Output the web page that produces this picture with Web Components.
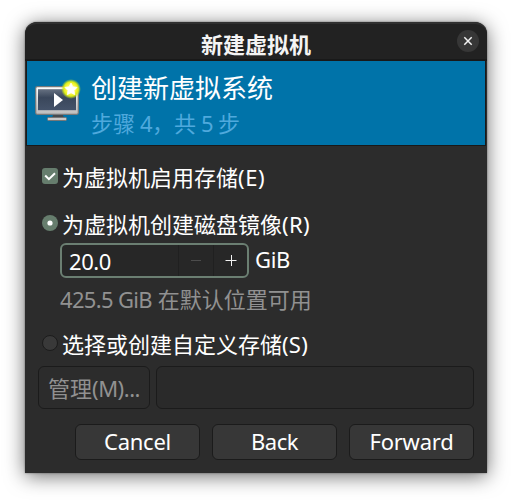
<!DOCTYPE html>
<html lang="zh-CN">
<head>
<meta charset="utf-8">
<title>新建虚拟机</title>
<style>
html,body{margin:0;background:#fff}
body{height:501px;overflow:hidden;font:22px/30px "Noto Sans","Noto Sans CJK SC",sans-serif;color:#fff}
</style>
</head>
<body>
<vm-dialog>
  <vm-titlebar slot="title">新建虚拟机</vm-titlebar>
  <vm-banner slot="banner">创建新虚拟系统<span slot="step">步骤 <fit-text w="12">4</fit-text>，共 <fit-text w="12">5</fit-text> 步</span></vm-banner>
  <vm-option kind="check" style="margin-top:16px">为虚拟机启用存储<fit-text w="27">(E)</fit-text></vm-option>
  <vm-option kind="radio-on" style="margin-top:17px">为虚拟机创建磁盘镜像<fit-text w="28">(R)</fit-text></vm-option>
  <vm-spin value="20.0"><fit-text w="35">GiB</fit-text></vm-spin>
  <vm-hint><fit-text w="92">425.5 GiB</fit-text> 在默认位置可用</vm-hint>
  <vm-option kind="radio" style="margin-top:15px">选择或创建自定义存储<fit-text w="26">(S)</fit-text></vm-option>
  <vm-path>管理<fit-text w="48">(M)...</fit-text></vm-path>
  <vm-button slot="actions"><fit-text w="67">Cancel</fit-text></vm-button>
  <vm-button slot="actions"><fit-text w="47">Back</fit-text></vm-button>
  <vm-button slot="actions"><fit-text w="84">Forward</fit-text></vm-button>
</vm-dialog>
<script>
const define = (name, html, setup) => customElements.define(name, class extends HTMLElement {
  constructor(){
    super();
    this.attachShadow({mode:'open'}).innerHTML = html;
  }
  connectedCallback(){ if (setup) setup(this, this.shadowRoot); }
});

// Spreads a Latin run so that its advance equals the w attribute.
define('fit-text', `<style>:host{display:inline-block;white-space:pre}span{display:inline-block}</style><span><slot></slot></span>`,
  (el, root) => {
    const s = root.querySelector('span');
    const n = el.textContent.length, w = +el.getAttribute('w');
    s.style.letterSpacing = (w - s.getBoundingClientRect().width) / n + 'px';
  });

define('vm-dialog', `<style>
:host{display:flex;flex-direction:column;box-sizing:border-box;width:462px;height:451px;margin:22px 0 0 25px;background:#2c2c2c;border-radius:12px 12px 0 0;box-shadow:0 3px 20px rgba(0,0,0,.58),0 0 2px rgba(0,0,0,.5);float:left}
main{display:flex;flex-direction:column;flex:1}
footer{display:flex;gap:12px;justify-content:flex-end;padding:0 13px 13px 0}
</style><slot name="title"></slot><slot name="banner"></slot><main><slot></slot></main><footer><slot name="actions"></slot></footer>`);

define('vm-titlebar', `<style>
:host{display:grid;grid-template-columns:50px 1fr 50px;align-items:start;box-sizing:border-box;height:39px;background:#222;border-top:2px solid #303030;border-bottom:2px solid #191919;border-radius:12px 12px 0 0;font-weight:600;color:#f4f4f4}
b{grid-column:2;text-align:center;padding-top:5px;font-weight:600}
svg{width:22px;height:22px;margin:6px 0 0 20px}
</style><b><slot></slot></b><svg viewBox="0 0 22 22"><circle cx="11" cy="11" r="11" fill="#373737"/><path d="M7.3 7.3l7.4 7.4M14.7 7.3l-7.4 7.4" stroke="#f2f2f2" stroke-width="1.5"/></svg>`);

define('vm-banner', `<style>
:host{display:flex;box-sizing:border-box;height:85px;margin:0 1px;background:#0073a9;border:solid #191919;border-width:0 1px 1px}
svg{width:48px;height:48px;margin:17px 8px 0}
h1{font:400 26px/36px "Noto Sans CJK SC",sans-serif;margin:8px 0 0}
p{margin:2px 0 0;line-height:32px;word-spacing:-.7px;color:#4fa9dd}
</style>
<svg viewBox="0 0 48 48"><defs><linearGradient id="f" x2="0" y2="1"><stop stop-color="#fff"/><stop offset="1" stop-color="#bcbcbc"/></linearGradient><linearGradient id="s" x2="0" y2="1"><stop stop-color="#667181"/><stop offset=".4" stop-color="#3a475b"/><stop offset="1" stop-color="#45536a"/></linearGradient><radialGradient id="g"><stop offset=".45" stop-color="#fff84a"/><stop offset=".72" stop-color="#dded17"/><stop offset="1" stop-color="#b9df20" stop-opacity="0"/></radialGradient></defs>
<path d="M18 37h10l1 3H17z" fill="#454b50"/><rect x="12.5" y="39.5" width="19" height="3" rx="1" fill="#c9c9c9" stroke="#777"/>
<rect x=".7" y="8.7" width="42.6" height="27.6" rx="1.5" fill="url(#f)" stroke="#77797a" stroke-width="1.2"/><rect x="3" y="11.2" width="38" height="21" fill="url(#s)"/>
<path d="M19 15v14l9-7z" fill="#fff"/><circle cx="36" cy="11" r="10" fill="url(#g)"/>
<path d="M36 5l1.9 3.7 4.2.7-3 3 .6 4.3L36 14.8l-3.7 1.9.6-4.3-3-3 4.2-.7z" fill="#fff" stroke="#fff" stroke-width=".7"/></svg>
<div><h1><slot></slot></h1><p><slot name="step"></slot></p></div>`);

const marks = {
  check:'<rect width="16" height="16" rx="3" fill="#667d6d"/><path d="M3.2 7.5l3.7 3.7 6.1-6" fill="none" stroke="#fff" stroke-width="2"/>',
  'radio-on':'<circle cx="8" cy="8" r="8" fill="#667d6d"/><circle cx="8" cy="8" r="2.6" fill="#fff"/>',
  radio:'<circle cx="8" cy="8" r="7.5" fill="#393939" stroke="#1c1c1c"/>'
};
define('vm-option', `<style>
:host{display:flex;height:30px;padding-left:17px;gap:4px;white-space:nowrap}
svg{width:16px;height:16px;flex:none;margin-top:6px}
</style><svg viewBox="0 0 16 16"></svg><span><slot></slot></span>`,
  (el, root) => root.querySelector('svg').innerHTML = marks[el.getAttribute('kind')]);

define('vm-spin', `<style>
:host{display:flex;gap:6px;height:35px;margin:4px 0 0 35px}
.box{display:grid;grid-template-columns:1fr 35px 34px;box-sizing:border-box;width:189px;border:2px solid #6b7f72;border-radius:6px;background:#272727}
.box>*{box-sizing:border-box}
.v{padding:1px 0 0 7px}
.b{border-left:1px solid #202020;display:grid;place-items:center}
.u{padding-top:1px}
svg{width:12px;height:12px;margin-top:-2px}
</style><div class="box"><span class="v"><fit-text w="42"></fit-text></span><span class="b"><svg viewBox="0 0 12 12"><path d="M1 6.5h10" stroke="#4c4c4c"/></svg></span><span class="b"><svg viewBox="0 0 12 12"><path d="M.5 6.5h11M6.5 1v11" stroke="#f2f2f2"/></svg></span></div><span class="u"><slot></slot></span>`,
  (el, root) => {
    const t = root.querySelector('fit-text');
    t.textContent = el.getAttribute('value');
    t.replaceWith(t.cloneNode(true));
  });

define('vm-hint', `<style>:host{display:block;height:30px;margin:6px 0 0 35px;color:#919191;white-space:nowrap}</style><slot></slot>`);

define('vm-path', `<style>
:host{display:flex;gap:6px;height:43px;margin:7px 13px 0;color:#919191}
span{box-sizing:border-box;width:112px;border:1px solid #1b1b1b;border-radius:6px;padding:6px 0 0 9px;white-space:nowrap}
i{flex:1;border:1px solid #1b1b1b;border-radius:6px;background:#2a2a2a}
</style><span><slot></slot></span><i></i>`);

define('vm-button', `<style>
:host{display:flex;justify-content:center;box-sizing:border-box;width:125px;height:36px;border:1px solid #1b1b1b;border-radius:6px;background:#373737;padding-top:1px}
</style><slot></slot>`);
</script>
</body>
</html>
